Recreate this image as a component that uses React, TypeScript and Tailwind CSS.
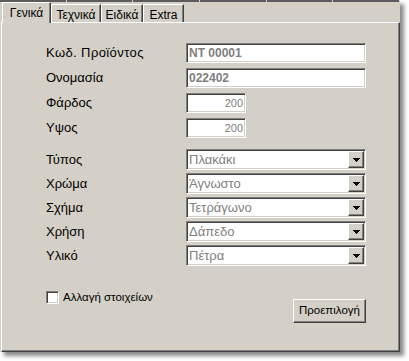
import React from "react";

const sunken =
  "border border-t-[#808080] border-l-[#808080] border-b-white border-r-white p-[1px] shadow-[inset_1px_1px_0_#404040,inset_-1px_-1px_0_#d4d0c8]";
const raised =
  "border border-t-white border-l-white border-b-[#404040] border-r-[#404040] shadow-[inset_-1px_-1px_0_#808080,inset_1px_1px_0_#d4d0c8]";

function Arrow() {
  return (
    <svg width="7" height="4" viewBox="0 0 7 4" shapeRendering="crispEdges">
      <rect x="0" y="0" width="7" height="1" fill="#000" />
      <rect x="1" y="1" width="5" height="1" fill="#000" />
      <rect x="2" y="2" width="3" height="1" fill="#000" />
      <rect x="3" y="3" width="1" height="1" fill="#000" />
    </svg>
  );
}

function Combo({ value }: { value: string }) {
  return (
    <div className={`w-[180px] h-[21px] bg-white flex ${sunken}`}>
      <div className="flex-1 pl-[1px] text-[13px] leading-[17px] text-[#808080] whitespace-nowrap overflow-hidden">
        {value}
      </div>
      <div className={`w-[16px] h-[17px] bg-[#d4d0c8] flex items-center justify-center ${raised}`}>
        <Arrow />
      </div>
    </div>
  );
}

const labelCls = "w-[140px] text-[13px] leading-[20px] text-black whitespace-nowrap";

export default function App() {
  const combos: [string, string][] = [
    ["Τύπος", "Πλακάκι"],
    ["Χρώμα", "Άγνωστο"],
    ["Σχήμα", "Τετράγωνο"],
    ["Χρήση", "Δάπεδο"],
    ["Υλικό", "Πέτρα"],
  ];
  return (
    <div className="w-[409px] h-[361px] bg-white font-['Liberation_Sans',Arial,sans-serif] overflow-hidden">
      <div className="w-[400px] h-[352px] bg-[#d4d0c8] flex flex-col shadow-[4px_4px_4px_rgba(0,0,0,0.45)]">
        <div className="h-[2px] flex gap-[1px] pr-[1px]">
          {[0, 1, 2, 3, 4, 5].map((i) => (
            <div key={i} className="flex-1 h-[2px] bg-[#5c5c5c]" />
          ))}
        </div>
        <div className="h-[20px] flex items-end pl-[2px] text-[12px] text-black">
          <div className="relative z-10 w-[49px] h-[21px] -mb-[1px] bg-[#d4d0c8] border-l border-t border-l-white border-t-white border-r border-r-[#404040] shadow-[inset_-1px_0_0_#808080] flex justify-center pt-[3px] leading-[14px]">
            Γενικά
          </div>
          <div className="w-[50px] h-[18px] border-l border-t border-l-white border-t-white border-r border-r-[#404040] shadow-[inset_-1px_0_0_#808080] flex justify-center pt-[3px] leading-[14px]">
            Τεχνικά
          </div>
          <div className="w-[42px] h-[18px] border-l border-t border-l-white border-t-white border-r border-r-[#404040] shadow-[inset_-1px_0_0_#808080] flex justify-center pt-[3px] leading-[14px]">
            Ειδικά
          </div>
          <div className="w-[41px] h-[18px] border-l border-t border-l-white border-t-white border-r border-r-[#404040] shadow-[inset_-1px_0_0_#808080] flex justify-center pt-[3px] leading-[14px]">
            Extra
          </div>
        </div>
        <div className="flex-1 ml-[1px] border-t border-l border-t-white border-l-white border-r border-b border-r-[#404040] border-b-[#404040] shadow-[inset_-1px_-1px_0_#808080] pl-[44px] pt-[20px]">
          <div className="w-[320px] flex flex-col gap-[5px]">
            <div className="flex h-[20px] items-center">
              <div className={`${labelCls} tracking-[0.4px]`}>Κωδ. Προϊόντος</div>
              <div className={`w-[180px] h-[20px] bg-white ${sunken}`}>
                <div className="pl-[1px] text-[12px] font-bold leading-[16px] text-[#808080]">NT 00001</div>
              </div>
            </div>
            <div className="flex h-[20px] items-center">
              <div className={labelCls}>Ονομασία</div>
              <div className={`w-[180px] h-[20px] bg-white ${sunken}`}>
                <div className="pl-[1px] text-[12px] font-bold leading-[16px] text-[#808080]">022402</div>
              </div>
            </div>
            <div className="flex h-[20px] items-center">
              <div className={labelCls}>Φάρδος</div>
              <div className={`w-[60px] h-[20px] bg-white ${sunken}`}>
                <div className="pr-[1px] text-right text-[11px] leading-[16px] text-[#808080]">200</div>
              </div>
            </div>
            <div className="flex h-[20px] items-center">
              <div className={labelCls}>Υψος</div>
              <div className={`w-[60px] h-[20px] bg-white ${sunken}`}>
                <div className="pr-[1px] text-right text-[11px] leading-[16px] text-[#808080]">200</div>
              </div>
            </div>
          </div>
          <div className="w-[320px] mt-[11px] flex flex-col gap-[3px]">
            {combos.map(([l, v]) => (
              <div key={l} className="flex h-[21px] items-center">
                <div className={labelCls}>{l}</div>
                <Combo value={v} />
              </div>
            ))}
          </div>
          <div className="w-[320px] mt-[24px] flex items-start justify-between">
            <div className="flex items-center gap-[4px]">
              <div className={`w-[13px] h-[13px] bg-white ${sunken}`} />
              <div className="text-[11.5px] leading-[14px] text-black">Αλλαγή στοιχείων</div>
            </div>
            <div
              className={`mt-[9px] w-[73px] h-[24px] flex items-center justify-center text-[11.5px] text-black bg-[#d4d0c8] ${raised}`}
            >
              Προεπιλογή
            </div>
          </div>
        </div>
      </div>
    </div>
  );
}
